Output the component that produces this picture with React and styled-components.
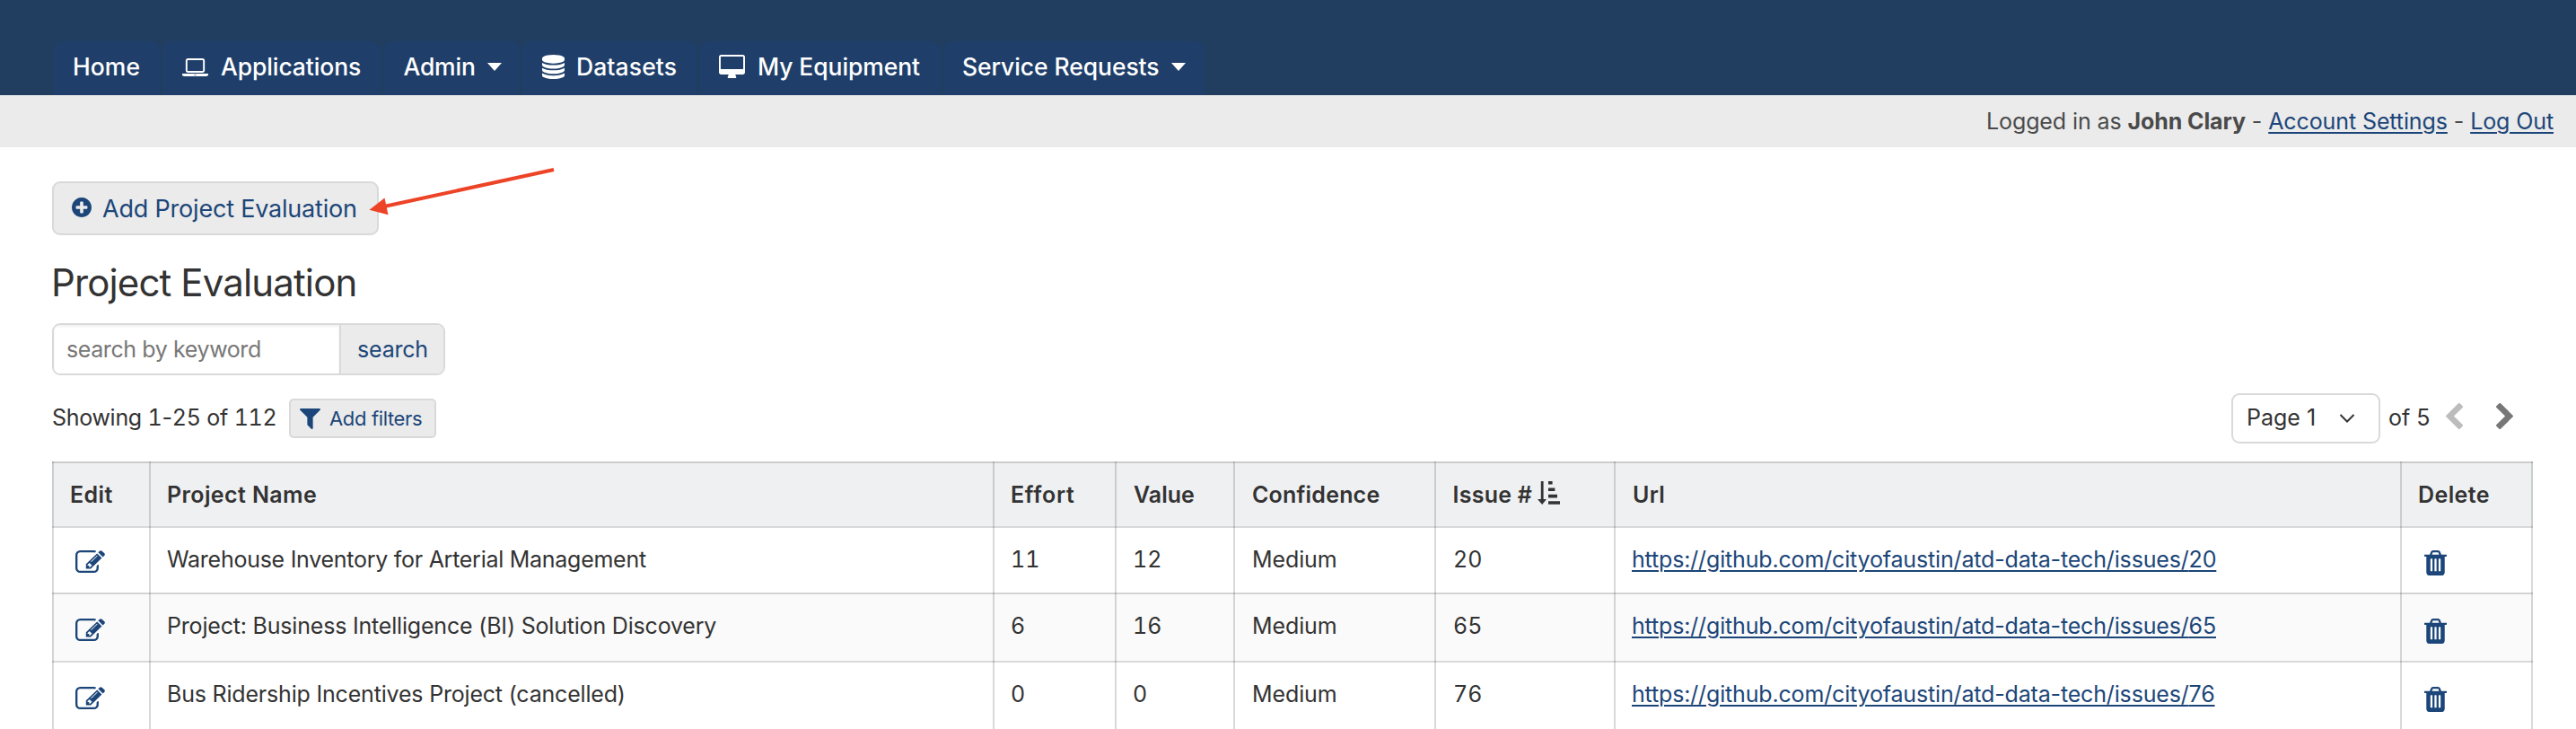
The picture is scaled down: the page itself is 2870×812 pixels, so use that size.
import React from "react";
import styled, { createGlobalStyle } from "styled-components";

const Global = createGlobalStyle`
  * { box-sizing: border-box; }
  html, body { margin: 0; height: 812px; overflow: hidden; background: #fff; }
  body, input, button {
    font-family: Inter, "Liberation Sans", sans-serif;
    font-size: 25px;
    color: #333;
  }
`;

const link = "#1c4679";

const Page = styled.div`
  position: relative;
  height: 812px;
  overflow: hidden;
`;

const Header = styled.header`
  height: 106px;
  padding: 46px 0 0 60px;
  background: #213e61;
`;

const Nav = styled.nav`
  display: flex;
  gap: 3px;
  height: 60px;
`;

const Tab = styled.a`
  display: flex;
  align-items: center;
  width: ${(p) => p.$width}px;
  padding: 0 0 4px ${(p) => p.$pad || 21}px;
  border-radius: 10px 10px 0 0;
  background: #1f3f6a;
  color: #fff;
  font-size: 26.5px;
  font-weight: 500;
  letter-spacing: ${(p) => p.$ls}px;
  white-space: nowrap;
`;

const Label = styled.span`
  margin-left: ${(p) => p.$gap || 0}px;
`;

const Caret = styled.span`
  width: 0;
  height: 0;
  margin-left: 13px;
  border: 8px solid transparent;
  border-top: 9px solid #fff;
  border-bottom: 0;
`;

const Icon = styled.svg`
  flex: none;
  width: ${(p) => p.$w}px;
  height: ${(p) => p.$h}px;
  margin-top: ${(p) => p.$top || 0}px;
  margin-left: ${(p) => p.$left || 0}px;
  fill: ${(p) => p.$color || "currentColor"};
`;

const UserBar = styled.div`
  height: 58px;
  padding-right: 25px;
  background: #ebebeb;
  color: #4a4a4a;
  line-height: 58px;
  letter-spacing: -0.1px;
  text-align: right;
`;

const Link = styled.a`
  color: ${link};
  text-decoration: underline;
  text-decoration-thickness: 2px;
  text-underline-offset: 3px;
`;

const Main = styled.main`
  padding: 38px 48px 0 58px;
`;

const AddButton = styled.button`
  display: flex;
  align-items: center;
  width: 364px;
  height: 60px;
  padding: 0 0 0 20px;
  border: 2px solid #d9d9d9;
  border-radius: 9px;
  background: #ebebeb;
  color: ${link};
  font-size: 27px;
  letter-spacing: -0.2px;
  white-space: nowrap;
`;

const Title = styled.h1`
  height: 50px;
  margin: 28px 0 20px -1px;
  font-size: 42px;
  font-weight: 400;
  line-height: 50px;
  letter-spacing: -0.87px;
`;

const Search = styled.form`
  display: flex;
  width: 438px;
  height: 58px;
  border: 2px solid #d9d9d9;
  border-radius: 9px;
  overflow: hidden;
`;

const SearchInput = styled.input`
  width: 318px;
  padding: 0 0 0 14px;
  border: 0;
  background: #fff;
  box-shadow: inset 0 2px 3px rgba(0, 0, 0, 0.06);
  letter-spacing: -0.4px;
  &::placeholder { color: #777; opacity: 1; }
`;

const SearchButton = styled.button`
  flex: 1;
  padding: 0 0 0 1px;
  border: 0;
  border-left: 2px solid #d9d9d9;
  background: #ebebeb;
  color: ${link};
  letter-spacing: -0.2px;
`;

const Toolbar = styled.div`
  display: flex;
  align-items: center;
  height: 60px;
  margin: 18px 0;
`;

const Count = styled.span`
  width: 264px;
  padding-bottom: 2px;
  letter-spacing: -0.3px;
  white-space: nowrap;
`;

const Num = styled.span`
  font-variant-numeric: tabular-nums;
`;

const FilterButton = styled.button`
  display: flex;
  align-items: center;
  width: 164px;
  height: 44px;
  padding: 0 0 0 10px;
  border: 2px solid #d9d9d9;
  border-radius: 5px;
  background: #ebebeb;
  color: ${link};
  font-size: 22px;
  letter-spacing: -0.35px;
  white-space: nowrap;
`;

const Pager = styled.div`
  display: flex;
  align-items: center;
  width: 336px;
  margin-left: auto;
`;

const PageSelect = styled.div`
  display: flex;
  align-items: center;
  justify-content: space-between;
  width: 166px;
  height: 56px;
  padding: 0 26px 2px 15px;
  border: 2px solid #d9d9d9;
  border-radius: 9px;
`;

const Total = styled.span`
  width: 65px;
  padding: 0 0 2px 9px;
`;

const Table = styled.div`
  width: 2764px;
`;

const Row = styled.div`
  display: grid;
  grid-template-columns: 108px 940px 136px 132px 224px 200px 876px 148px;
  height: ${(p) => p.$height}px;
  border-top: 2px solid rgba(0, 0, 0, 0.15);
  background: ${(p) => p.$bg || "#fff"};
  font-weight: ${(p) => (p.$head ? 600 : 400)};
`;

const Cell = styled.div`
  margin-top: -2px;
  padding: 2px 0 0 ${(p) => p.$pad || 18}px;
  border-left: 2px solid rgba(0, 0, 0, 0.15);
  line-height: 70px;
  letter-spacing: ${(p) => p.$ls || 0}px;
  white-space: nowrap;
  &:last-child { border-right: 2px solid rgba(0, 0, 0, 0.15); }
`;

const NumberCell = styled(Cell)`
  font-variant-numeric: tabular-nums;
`;

const IconCell = styled(Cell)`
  display: flex;
  align-items: flex-start;
`;

const Arrow = styled.svg`
  position: absolute;
  left: 400px;
  top: 170px;
  width: 240px;
  height: 80px;
  pointer-events: none;
`;

const P = {
  laptop: "M416 1152q-66 0-113-47t-47-113v-704q0-66 47-113t113-47h1088q66 0 113 47t47 113v704q0 66-47 113t-113 47h-1088zm-32-864v704q0 13 9.5 22.5t22.5 9.5h1088q13 0 22.5-9.5t9.5-22.5v-704q0-13-9.5-22.5t-22.5-9.5h-1088q-13 0-22.5 9.5t-9.5 22.5zm1376 928h160v96q0 40-47 68t-113 28h-1600q-66 0-113-28t-47-68v-96h1760zm-720 96q16 0 16-16t-16-16h-160q-16 0-16 16t16 16h160z",
  database: "M896 768q237 0 443-43t325-127v170q0 69-103 128t-280 93.5-385 34.5-385-34.5-280-93.5-103-128v-170q119 84 325 127t443 43zm0 768q237 0 443-43t325-127v170q0 69-103 128t-280 93.5-385 34.5-385-34.5-280-93.5-103-128v-170q119 84 325 127t443 43zm0-384q237 0 443-43t325-127v170q0 69-103 128t-280 93.5-385 34.5-385-34.5-280-93.5-103-128v-170q119 84 325 127t443 43zm0-1152q208 0 385 34.5t280 93.5 103 128v128q0 69-103 128t-280 93.5-385 34.5-385-34.5-280-93.5-103-128v-128q0-69 103-128t280-93.5 385-34.5z",
  desktop: "M1728 992v-832q0-13-9.5-22.5t-22.5-9.5h-1600q-13 0-22.5 9.5t-9.5 22.5v832q0 13 9.5 22.5t22.5 9.5h1600q13 0 22.5-9.5t9.5-22.5zm128-832v1088q0 66-47 113t-113 47h-544q0 37 16 77.5t32 71 16 43.5q0 26-19 45t-45 19h-512q-26 0-45-19t-19-45q0-14 16-44t32-70 16-78h-544q-66 0-113-47t-47-113v-1088q0-66 47-113t113-47h1600q66 0 113 47t47 113z",
  plus: "M1344 960v-128q0-26-19-45t-45-19h-256v-256q0-26-19-45t-45-19h-128q-26 0-45 19t-19 45v256h-256q-26 0-45 19t-19 45v128q0 26 19 45t45 19h256v256q0 26 19 45t45 19h128q26 0 45-19t19-45v-256h256q26 0 45-19t19-45zm320-64q0 209-103 385.5t-279.5 279.5-385.5 103-385.5-103-279.5-279.5-103-385.5 103-385.5 279.5-279.5 385.5-103 385.5 103 279.5 279.5 103 385.5z",
  filter: "M1595 295q17 41-14 70l-493 493v742q0 42-39 59-13 5-25 5-27 0-45-19l-256-256q-19-19-19-45v-486l-493-493q-31-29-14-70 17-39 59-39h1280q42 0 59 39z",
  chevron: "M1427 301l-531 531 531 531q19 19 19 45t-19 45l-166 166q-19 19-45 19t-45-19l-742-742q-19-19-19-45t19-45l742-742q19-19 45-19t45 19l166 166q19 19 19 45t-19 45z",
  edit: "M888 1184l116-116-152-152-116 116v56h96v96h56zm440-720q-16-16-33 1l-350 350q-17 17-1 33t33-1l350-350q17-17 1-33zm80 594v190q0 119-84.5 203.5t-203.5 84.5h-832q-119 0-203.5-84.5t-84.5-203.5v-832q0-119 84.5-203.5t203.5-84.5h832q63 0 117 25 15 7 18 23 3 17-9 29l-49 49q-14 14-32 8-23-6-45-6h-832q-66 0-113 47t-47 113v832q0 66 47 113t113 47h832q66 0 113-47t47-113v-126q0-13 9-22l64-64q15-15 35-7t20 29zm-96-738l288 288-672 672h-288v-288zm444 132l-92 92-288-288 92-92q28-28 68-28t68 28l152 152q28 28 28 68t-28 68z",
  trash: "M704 1376v-704q0-14-9-23t-23-9h-64q-14 0-23 9t-9 23v704q0 14 9 23t23 9h64q14 0 23-9t9-23zm256 0v-704q0-14-9-23t-23-9h-64q-14 0-23 9t-9 23v704q0 14 9 23t23 9h64q14 0 23-9t9-23zm256 0v-704q0-14-9-23t-23-9h-64q-14 0-23 9t-9 23v704q0 14 9 23t23 9h64q14 0 23-9t9-23zm-544-992h448l-48-117q-7-9-17-11h-317q-10 2-17 11zm928 32v64q0 14-9 23t-23 9h-96v948q0 83-47 143.5t-113 60.5h-832q-66 0-113-58.5t-47-141.5v-952h-96q-14 0-23-9t-9-23v-64q0-14 9-23t23-9h309l70-167q15-37 54-63t79-26h320q40 0 79 26t54 63l70 167h309q14 0 23 9t9 23z",
};

const Glyph = ({ d, box, ...rest }) => (
  <Icon viewBox={box} preserveAspectRatio="none" {...rest}><path d={P[d]} /></Icon>
);

const URL = "https://github.com/cityofaustin/atd-data-tech/issues/";

const rows = [
  { name: "Warehouse Inventory for Arterial Management", ls: -0.27, effort: 11, value: 12, issue: 20, height: 74, icon: 25 },
  { name: "Project: Business Intelligence (BI) Solution Discovery", ls: -0.19, effort: 6, value: 16, issue: 65, height: 76, icon: 27, bg: "#fafafa" },
  { name: "Bus Ridership Incentives Project (cancelled)", ls: -0.19, effort: 0, value: 0, issue: 76, height: 76, icon: 27 },
];

export default function App() {
  return (
    <Page>
      <Global />
      <Header>
        <Nav>
          <Tab $width={118} $ls={0.05}>Home</Tab>
          <Tab $width={243} $ls={-0.1}>
            <Glyph d="laptop" box="0 128 1920 1280" $w={29} $h={20} $top={2} $left={1} />
            <Label $gap={14}>Applications</Label>
          </Tab>
          <Tab $width={152} $pad={22.5} $ls={-0.2}>Admin<Caret /></Tab>
          <Tab $width={195} $ls={0.1}>
            <Glyph d="database" box="128 0 1536 1792" $w={25} $h={27} $top={1} $left={1} />
            <Label $gap={13}>Datasets</Label>
          </Tab>
          <Tab $width={268} $ls={-0.1}>
            <Glyph d="desktop" box="-64 0 1920 1664" $w={29} $h={26} />
            <Label $gap={14}>My Equipment</Label>
          </Tab>
          <Tab $width={291} $ls={-0.08}>Service Requests<Caret /></Tab>
        </Nav>
      </Header>
      <UserBar>
        Logged in as <b>John Clary</b> - <Link>Account Settings</Link> - <Link>Log Out</Link>
      </UserBar>
      <Main>
        <AddButton>
          <Glyph d="plus" box="128 128 1536 1536" $w={22} $h={22} $top={-2} />
          <Label $gap={12}>Add Project Evaluation</Label>
        </AddButton>
        <Title>Project Evaluation</Title>
        <Search>
          <SearchInput placeholder="search by keyword" />
          <SearchButton type="button">search</SearchButton>
        </Search>
        <Toolbar>
          <Count>Showing <Num>1</Num>-<Num>25</Num> of <Num>112</Num></Count>
          <FilterButton>
            <Glyph d="filter" box="190 256 1412 1408" $w={23} $h={23} />
            <Label $gap={10}>Add filters</Label>
          </FilterButton>
          <Pager>
            <PageSelect>
              Page 1
              <Icon viewBox="0 0 18 12" $w={18} $h={12} $top={2}>
                <path d="M1.5 2L9 9.5L16.5 2" fill="none" stroke="#333" strokeWidth="2" />
              </Icon>
            </PageSelect>
            <Total>of 5</Total>
            <Glyph d="chevron" box="410 26 1036 1612" $w={19} $h={29} $left={8} $top={-5} $color="#bcbcbc" />
            <Icon viewBox="410 26 1036 1612" preserveAspectRatio="none" $w={19} $h={29} $left={37} $top={-5} $color="#777">
              <path d={P.chevron} transform="translate(1856 0) scale(-1 1)" />
            </Icon>
          </Pager>
        </Toolbar>
        <Table>
          <Row $head $height={72} $bg="#eff0f2">
            <Cell $ls={0.4}>Edit</Cell>
            <Cell $ls={0.4}>Project Name</Cell>
            <Cell $pad={18} $ls={0.7}>Effort</Cell>
            <Cell $pad={19}>Value</Cell>
            <Cell $pad={19} $ls={0.2}>Confidence</Cell>
            <IconCell $pad={18.5} $ls={0.25}>
              Issue #
              <Icon viewBox="0 0 25 26" $w={25} $h={26} $top={20} $left={6}>
                <path d="M3.8 0h2.8v20h3.4L5.2 26 0 20h3.8zM12 0h4.6v3.6H12zM12 7.5h7.4v3.6H12zM12 14.8h10v3.6H12zM12 22.2h13v3.6H12z" />
              </Icon>
            </IconCell>
            <Cell $ls={0.3} $pad={19}>Url</Cell>
            <Cell $ls={0.4}>Delete</Cell>
          </Row>
          {rows.map((r) => (
            <Row key={r.issue} $height={r.height} $bg={r.bg}>
              <IconCell $pad={24}>
                <Glyph d="edit" box="0 128 1792 1408" $w={33} $h={25} $top={r.icon} $color={link} />
              </IconCell>
              <Cell $ls={r.ls}>{r.name}</Cell>
              <NumberCell $pad={18}>{r.effort}</NumberCell>
              <NumberCell $pad={18}>{r.value}</NumberCell>
              <Cell $ls={-0.1} $pad={19}>Medium</Cell>
              <NumberCell $pad={19}>{r.issue}</NumberCell>
              <Cell $ls={-0.16} $pad={18}><Link>{URL}{r.issue}</Link></Cell>
              <IconCell $pad={24.5}>
                <Glyph d="trash" box="192 128 1408 1536" $w={25} $h={28} $top={r.icon} $color={link} />
              </IconCell>
            </Row>
          ))}
          <Row $height={20} />
        </Table>
      </Main>
      <Arrow viewBox="400 170 240 80">
        <path d="M617 189L428 230" stroke="#ed4326" strokeWidth="4" fill="none" />
        <path d="M411.5 233.7L428.5 220.5L432.5 239.3Z" fill="#ed4326" />
      </Arrow>
    </Page>
  );
}
